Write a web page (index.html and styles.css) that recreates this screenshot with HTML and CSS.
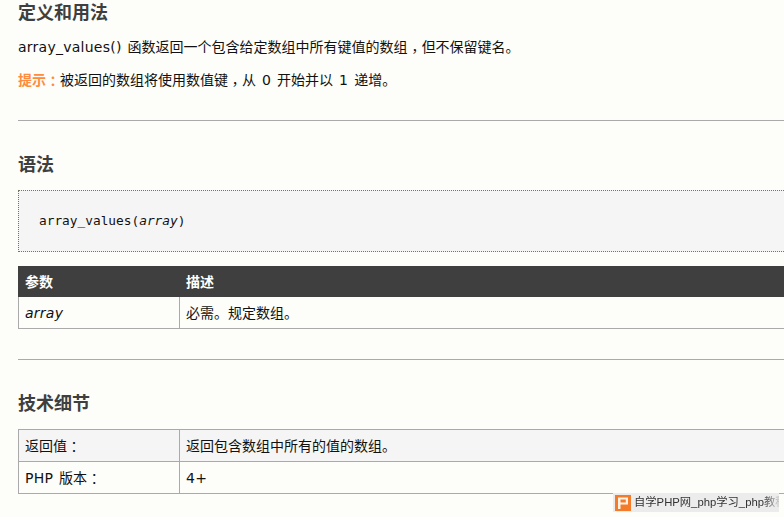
FILE: index.html
```html
<!DOCTYPE html>
<html lang="zh">
<head>
<meta charset="utf-8">
<title>array_values</title>
<link rel="stylesheet" href="styles.css">
</head>
<body>
<main class="page">
  <section class="sec first">
    <h2>定义和用法</h2>
    <p><span class="lat">array_values()</span> 函数返回一个包含给定数组中所有键值的数组<span class="tc comma" lang="zh-Hant">，</span>但不保留键名。</p>
    <p><strong class="tip">提示<span class="tc" lang="zh-Hant">：</span></strong>被返回的数组将使用数值键<span class="tc comma" lang="zh-Hant">，</span>从 <span class="lat">0</span> 开始并以 <span class="lat">1</span> 递增。</p>
  </section>
  <section class="sec">
    <h2>语法</h2>
    <pre class="code">array_values(<i>array</i>)</pre>
    <table>
      <tr class="head"><th class="c1">参数</th><th>描述</th></tr>
      <tr><td class="c1"><i class="lat">array</i></td><td>必需。规定数组。</td></tr>
    </table>
  </section>
  <section class="sec">
    <h2>技术细节</h2>
    <table>
      <tr class="alt"><td class="c1">返回值<span class="tc" lang="zh-Hant">：</span></td><td>返回包含数组中所有的值的数组。</td></tr>
      <tr><td class="c1"><span class="lat">PHP</span> 版本<span class="tc" lang="zh-Hant">：</span></td><td><span class="lat">4+</span></td></tr>
    </table>
  </section>
</main>
<div class="badge">
  <svg class="logo" width="16" height="16" viewBox="0 0 16 16"><rect width="16" height="16" fill="#f47b2a"/><path d="M3 14V2.500H13V9.500H5.500V14Z M5.500 4.500V7.500H10.800V4.500Z" fill="#fff3e6" fill-rule="evenodd"/></svg>
  <span class="badge-text">自学PHP网_php学习_php教程</span>
</div>
</body>
</html>
```
FILE: styles.css
```css
html, body { margin: 0; height: 100%; overflow: hidden; }
body {
  background: #fdfdf9;
  color: #111;
  font: 14px/21px "DejaVu Sans", "Noto Sans CJK SC", sans-serif;
  word-spacing: 1.500px;
  position: relative;
}
.page { width: 1000px; padding-left: 18px; }
.lat { letter-spacing: 0.250px; }
.tc { font-family: "Noto Sans CJK TC", sans-serif; line-height: 1; vertical-align: -1px; }
.comma { vertical-align: -4px; }
.sec { border-bottom: 1px solid #aaa; padding-bottom: 30px; margin-bottom: 31px; }
.sec:last-child { border-bottom: 0; }
.first { padding-bottom: 29px; }
h2 { font-size: 18px; line-height: 26px; margin: 0 0 12px; color: #3f3f3f; font-weight: bold; }
.first h2 { margin-bottom: 11px; }
p { margin: 0 0 12px; }
.first p:last-child { margin-bottom: 0; }
.tip { color: #ff8c3c; }
.code {
  margin: 0 0 14px;
  height: 40px;
  padding: 10px 20px;
  border: 1px dotted #777755;
  background: #f5f5f5;
  font: 12.800px/40px "DejaVu Sans Mono", monospace;
  color: #111;
}
table { border-collapse: collapse; width: 100%; table-layout: fixed; }
th, td { border: 1px solid #aaa; padding: 1px 6px 0; height: 30px; text-align: left; }
th { background: #3f3f3f; border-color: #3f3f3f; color: #fff; }
.head th { height: 28px; }
.c1 { width: 148px; }
.alt td { background: #f5f5f5; }
.badge {
  position: absolute;
  left: 613px;
  top: 493px;
  width: 166px;
  height: 19px;
  background: #ececec;
  display: flex;
  align-items: center;
  gap: 3px;
  padding-left: 2px;
  box-sizing: border-box;
  overflow: hidden;
  white-space: nowrap;
  font: 11.300px/19px "Liberation Sans", "Noto Sans CJK SC", sans-serif;
  word-spacing: 0;
  color: #333;
}
.logo { flex: none; }
.badge-text {
  -webkit-mask-image: linear-gradient(to right, #000 84%, transparent 97%);
  mask-image: linear-gradient(to right, #000 84%, transparent 97%);
}
```
